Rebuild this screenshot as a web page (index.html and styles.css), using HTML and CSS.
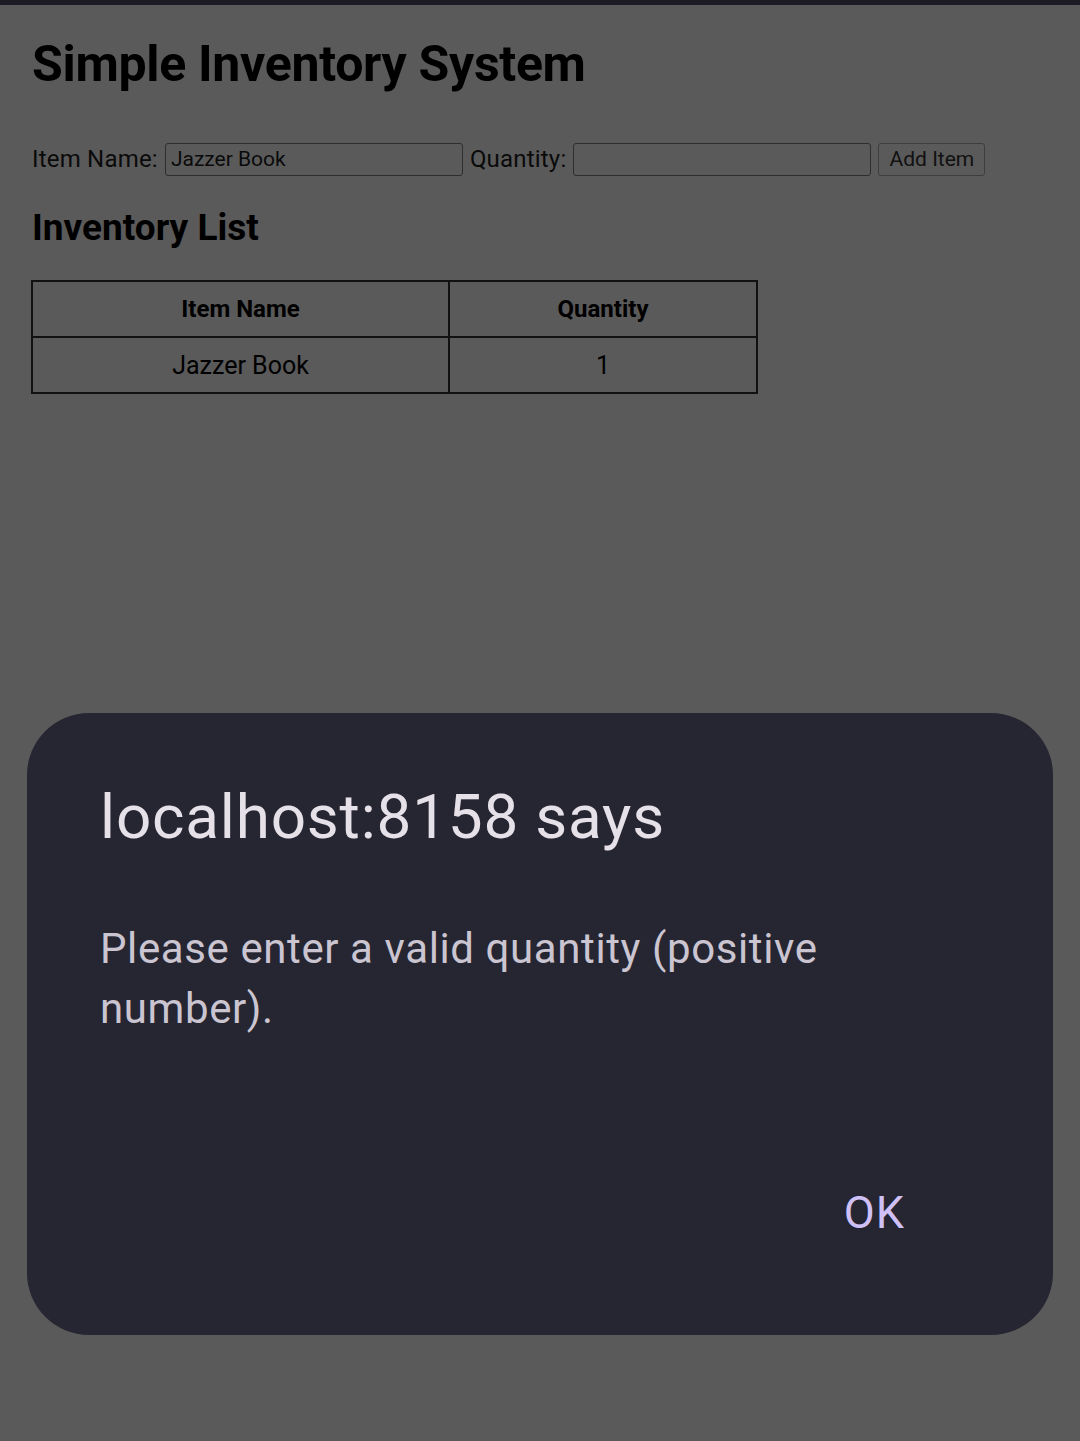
FILE: index.html
```html
<!DOCTYPE html>
<html>
<head>
<meta charset="utf-8">
<link rel="stylesheet" href="styles.css">
</head>
<body>
<div class="topbar"></div>
<main class="page">
  <h1 class="title">Simple Inventory System</h1>
  <form class="form">
    <label class="lbl">Item Name:</label>
    <div class="input">Jazzer Book</div>
    <label class="lbl">Quantity:</label>
    <div class="input"></div>
    <div class="btn">Add Item</div>
  </form>
  <h2 class="subtitle">Inventory List</h2>
  <table class="table">
    <thead>
      <tr><th class="c1">Item Name</th><th class="c2">Quantity</th></tr>
    </thead>
    <tbody>
      <tr><td>Jazzer Book</td><td>1</td></tr>
    </tbody>
  </table>
</main>
<div class="dialog">
  <div class="d-title">localhost:8158 says</div>
  <div class="d-body">Please enter a valid quantity (positive number).</div>
  <div class="d-actions"><span class="ok">OK</span></div>
</div>
</body>
</html>
```
FILE: styles.css
```css
html, body {
  margin: 0;
  padding: 0;
}
body {
  width: 1080px;
  height: 1441px;
  background: #5a5a5a;
  font-family: Roboto, "Noto Sans", sans-serif;
  color: #000;
  position: relative;
  overflow: hidden;
}
.topbar {
  height: 5px;
  background: #1d1c24;
}
.page {
  padding: 0 31px;
}
.title {
  margin: 0;
  padding-top: 29px;
  padding-left: 1px;
  font-size: 50px;
  font-weight: 700;
  line-height: 60px;
  letter-spacing: -0.3px;
}
.form {
  margin-top: 48px;
  display: flex;
  align-items: center;
  height: 34px;
  padding-left: 1px;
}
.lbl {
  font-size: 24px;
  margin-right: 7px;
  color: #0a0a0a;
  letter-spacing: 0.2px;
}
.input {
  box-sizing: border-box;
  width: 298px;
  height: 33px;
  border: 1.5px solid #2e2e2e;
  border-radius: 3px;
  font-size: 21px;
  line-height: 30px;
  padding-left: 5px;
  margin-right: 7px;
  color: #0a0a0a;
}
.btn {
  box-sizing: border-box;
  height: 33px;
  width: 107px;
  border: 1.5px solid #3e3e3e;
  border-radius: 3px;
  font-size: 21px;
  line-height: 30px;
  text-align: center;
  color: #111;
}
.subtitle {
  margin: 0;
  margin-top: 30px;
  padding-left: 1px;
  font-size: 37px;
  font-weight: 700;
  line-height: 44px;
}
.table {
  margin-top: 30px;
  border-collapse: collapse;
  width: 727px;
}
.table th, .table td {
  border: 2px solid #111;
  height: 54px;
  padding: 0;
  text-align: center;
  font-size: 24px;
}
.table td { font-size: 25px; }
.table th { font-weight: 700; }
.c1 { width: 415px; }
.dialog {
  position: absolute;
  left: 27px;
  top: 713px;
  width: 1026px;
  height: 622px;
  box-sizing: border-box;
  background: #262532;
  border-radius: 62px;
  padding: 72px 73px 0 73px;
  display: flex;
  flex-direction: column;
}
.d-title {
  font-family: Roboto, sans-serif;
  font-size: 62px;
  line-height: 64px;
  color: #e6e1e8;
  letter-spacing: 0.8px;
}
.d-body {
  margin-top: 70px;
  width: 800px;
  font-family: Roboto, sans-serif;
  font-size: 42px;
  line-height: 60px;
  letter-spacing: 0.6px;
  color: #cac5d0;
}
.d-actions {
  margin-top: auto;
  margin-bottom: 96px;
  display: flex;
  justify-content: flex-end;
  padding-right: 75px;
}
.ok {
  font-family: Roboto, sans-serif;
  font-size: 45px;
  color: #cfc1f7;
  font-weight: 400;
  letter-spacing: 1px;
}
```
